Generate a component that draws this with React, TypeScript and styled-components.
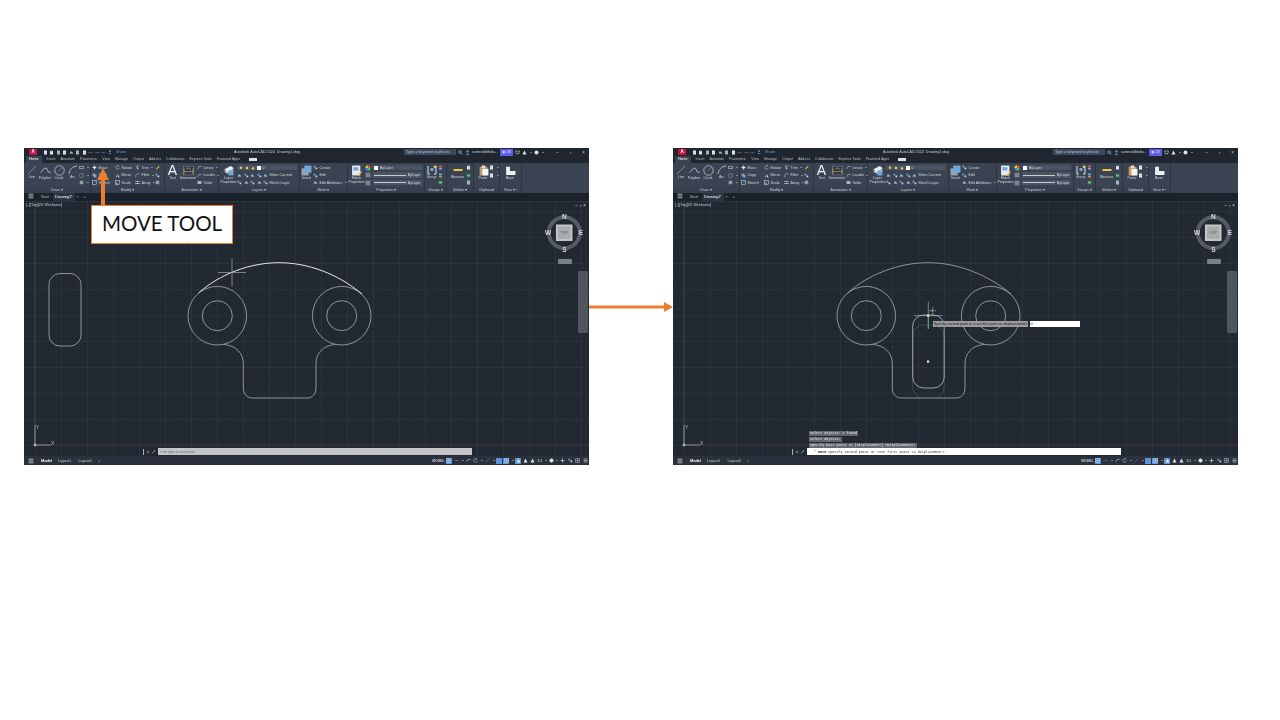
import React from "react";
import styled, { createGlobalStyle } from "styled-components";

const GlobalStyle = createGlobalStyle`
  html, body {
    margin: 0;
    padding: 0;
    background: #ffffff;
  }
`;

const Slide = styled.div`
  width: 1280px;
  height: 720px;
  box-sizing: border-box;
  padding: 148px 0 0 24px;
  display: flex;
  align-items: flex-start;
  background: #ffffff;
  overflow: hidden;
`;

const WindowSlot = styled.div`
  position: relative;
  width: 565px;
  height: 317px;
  flex: none;
`;

const Connector = styled.div`
  width: 84px;
  height: 317px;
  flex: none;
  display: flex;
  align-items: center;
`;

const Callout = styled.div`
  position: absolute;
  left: 67px;
  top: 57px;
  width: 142px;
  height: 39px;
  box-sizing: border-box;
  border: 1px solid #ed7d31;
  padding-bottom: 3px;
  background: #ffffff;
  display: flex;
  align-items: center;
  justify-content: center;
  font-family: Lato, "Open Sans", sans-serif;
  font-size: 20.5px;
  color: #111111;
`;

const CalloutArrow = styled.svg`
  position: absolute;
  left: 71px;
  top: 19px;
  width: 16px;
  height: 40px;
`;

const Frame = styled.div`
  width: 100%;
  height: 100%;
  display: flex;
  flex-direction: column;
  background: #1f2630;
  font-family: "Liberation Sans", Arial, sans-serif;
  font-size: 3.8px;
  color: #d3d8df;
  white-space: nowrap;
  filter: blur(0.4px);
  overflow: hidden;
`;

const TitleBar = styled.div`
  height: 8px;
  flex: none;
  display: flex;
  align-items: center;
  background: #1f2630;
`;

const QuickAccess = styled.div`
  width: 210px;
  flex: none;
  box-sizing: border-box;
  padding-left: 5px;
  display: flex;
  align-items: center;
  gap: 1.5px;
`;

const Logo = styled.div`
  width: 8px;
  height: 6px;
  margin-right: 4px;
  background: #c8123f;
  color: #ffffff;
  font-weight: 700;
  font-size: 4.5px;
  line-height: 6px;
  text-align: center;
`;

const ShareLink = styled.span`
  margin-left: 3px;
  color: #58a6e6;
`;

const DocTitle = styled.div`
  width: 170px;
  flex: none;
  font-size: 3.7px;
  color: #c6ccd4;
`;

const Tray = styled.div`
  flex: 1;
  display: flex;
  align-items: center;
  gap: 2px;
`;

const SearchBox = styled.div`
  width: 52px;
  height: 6px;
  flex: none;
  box-sizing: border-box;
  padding-left: 2px;
  background: #3c4a5e;
  color: #b7c0cc;
  line-height: 6px;
`;

const UserName = styled.span`
  width: 26px;
  font-size: 3.5px;
  color: #c6ccd4;
`;

const TrialBadge = styled.div`
  width: 13px;
  height: 7px;
  flex: none;
  background: #5f5fe6;
  color: #dfe3ff;
  text-align: center;
  line-height: 7px;
`;

const WinControls = styled.div`
  margin-left: auto;
  margin-right: 4px;
  display: flex;
  gap: 11px;
  color: #c6ccd4;
  font-size: 4.5px;
`;

const TabRow = styled.div`
  height: 7px;
  flex: none;
  display: flex;
  align-items: stretch;
  gap: 5px;
  padding-left: 2px;
  background: #1f2630;
`;

const RibbonTab = styled.div<{ $active?: boolean }>`
  padding: 0 ${(p) => (p.$active ? "3px" : "0")};
  line-height: 7px;
  font-size: 3.6px;
  color: ${(p) => (p.$active ? "#ffffff" : "#b6bdc7")};
  background: ${(p) => (p.$active ? "#3a4352" : "transparent")};
`;

const ViewPill = styled.div`
  width: 8px;
  height: 3px;
  align-self: center;
  margin-left: 4px;
  background: #dfe3e8;
`;

const Ribbon = styled.div`
  height: 30px;
  flex: none;
  display: flex;
  background: #3a4352;
`;

const Panel = styled.section<{ $w: number }>`
  width: ${(p) => p.$w}px;
  flex: none;
  display: flex;
  flex-direction: column;
  border-right: 0.5px solid #2c3441;
  box-sizing: border-box;
`;

const PanelBody = styled.div<{ $pad?: number }>`
  flex: 1;
  display: flex;
  gap: 0;
  padding: 1.5px 0 0 ${(p) => p.$pad ?? 1}px;
  min-height: 0;
`;

const PanelTitle = styled.div`
  height: 6px;
  flex: none;
  text-align: center;
  line-height: 6px;
  font-size: 3.6px;
  color: #c5cbd3;
  background: #37404e;
`;

const BigTool = styled.div<{ $w: number }>`
  width: ${(p) => p.$w}px;
  flex: none;
  display: flex;
  flex-direction: column;
  align-items: center;
  font-size: 3.5px;
  line-height: 4px;
  text-align: center;
  white-space: normal;
`;

const BigLetter = styled.div`
  height: 11px;
  font-size: 14px;
  line-height: 11px;
  color: #f2f4f6;
`;

const ToolColumn = styled.div<{ $w?: number }>`
  ${(p) => (p.$w ? `width: ${p.$w}px; flex: none;` : "flex: 1; min-width: 0;")}
  display: flex;
  flex-direction: column;
  gap: 1.5px;
`;

const ToolRow = styled.div`
  height: 6px;
  display: flex;
  align-items: center;
  gap: 1.5px;
  font-size: 3.7px;
`;

const Caret = styled.span`
  width: 0;
  height: 0;
  margin-left: 1px;
  border-left: 1px solid transparent;
  border-right: 1px solid transparent;
  border-top: 1.4px solid #c5cbd3;
`;

const DropDown = styled.div`
  flex: 1;
  height: 5.5px;
  min-width: 0;
  margin-right: 2px;
  padding: 0 1.5px;
  display: flex;
  align-items: center;
  gap: 2px;
  background: #4a5362;
  font-size: 3.5px;
`;

const Swatch = styled.span`
  width: 4px;
  height: 4px;
  flex: none;
  background: #ffffff;
`;

const Rule = styled.span`
  flex: 1;
  height: 0.5px;
  background: #c5cbd3;
`;

const FileTabs = styled.div`
  height: 9px;
  flex: none;
  box-sizing: border-box;
  border-bottom: 1px solid #2d3542;
  display: flex;
  align-items: stretch;
  padding-left: 4px;
  background: #1c222b;
`;

const FileTab = styled.div<{ $active?: boolean; $gap?: number }>`
  margin-left: ${(p) => p.$gap ?? 0}px;
  padding: 0 2px;
  line-height: 8px;
  color: ${(p) => (p.$active ? "#ffffff" : "#b6bdc7")};
  background: ${(p) => (p.$active ? "#2b3340" : "transparent")};
`;

const Canvas = styled.div`
  position: relative;
  flex: 1;
  min-height: 0;
  background-color: #212831;
  background-image:
    linear-gradient(#29313c 0.6px, transparent 0.6px),
    linear-gradient(90deg, #29313c 0.6px, transparent 0.6px),
    linear-gradient(#232a34 0.5px, transparent 0.5px),
    linear-gradient(90deg, #232a34 0.5px, transparent 0.5px);
  background-size: 26px 26px, 26px 26px, 5.2px 5.2px, 5.2px 5.2px;
  background-position: 11px 9px, 11px 9px, 11px 9px, 11px 9px;
`;

const Drawing = styled.svg`
  position: absolute;
  inset: 0;
  width: 100%;
  height: 100%;
`;

const ViewLabel = styled.div`
  position: absolute;
  left: 2px;
  top: 1px;
  font-size: 3.6px;
  color: #c6ccd4;
`;

const ViewportControls = styled.div`
  position: absolute;
  right: 3px;
  top: 1px;
  display: flex;
  gap: 2px;
  font-size: 4.5px;
  line-height: 5px;
  color: #d3d8df;
`;

const WcsPill = styled.div`
  position: absolute;
  left: 533.5px;
  top: 57px;
  width: 14px;
  height: 4.5px;
  border-radius: 1px;
  background: #77808c;
`;

const NavBar = styled.div`
  position: absolute;
  left: 554px;
  top: 69px;
  width: 10px;
  height: 62px;
  border-radius: 1px;
  background: #50565e;
`;

const CommandDock = styled.div`
  position: absolute;
  left: 119px;
  bottom: 1px;
  height: 7px;
  display: flex;
  align-items: center;
  gap: 1.5px;
  color: #c6ccd4;
`;

const Grip = styled.span`
  width: 1px;
  height: 6px;
  background: #aab1bb;
`;

const CommandInput = styled.div<{ $live?: boolean }>`
  width: 313.5px;
  height: 7px;
  margin-left: 0.5px;
  box-sizing: border-box;
  padding-left: ${(p) => (p.$live ? "7px" : "2px")};
  display: flex;
  align-items: center;
  gap: 2px;
  background: ${(p) => (p.$live ? "#ffffff" : "#c4c5c6")};
  color: ${(p) => (p.$live ? "#333333" : "#6b6f75")};
  font-family: ${(p) => (p.$live ? '"Liberation Mono", monospace' : '"Liberation Sans", sans-serif')};
  font-size: ${(p) => (p.$live ? 3.4 : 3.6)}px;
`;

const History = styled.div`
  position: absolute;
  left: 136px;
  top: 229px;
  display: flex;
  flex-direction: column;
  align-items: flex-start;
  gap: 1.2px;
`;

const HistoryLine = styled.div`
  height: 4.8px;
  padding: 0 1px;
  background: #62676e;
  color: #eceef0;
  font-family: "Liberation Mono", monospace;
  font-size: 3.4px;
  line-height: 4.8px;
`;

const PointPrompt = styled.div`
  position: absolute;
  left: 260px;
  top: 118.5px;
  width: 94.5px;
  height: 6px;
  padding-left: 1px;
  box-sizing: border-box;
  background: #9b9b9b;
  color: #1d1f22;
  font-size: 3.7px;
  line-height: 6px;
`;

const PointInput = styled.div`
  position: absolute;
  left: 356.5px;
  top: 118.5px;
  width: 50.5px;
  height: 6px;
  padding-left: 1px;
  box-sizing: border-box;
  background: #ffffff;
  color: #222222;
  font-size: 3.7px;
  line-height: 6px;
`;

const StatusBar = styled.div`
  height: 9px;
  flex: none;
  display: flex;
  align-items: center;
  padding-left: 4px;
  padding-right: 1px;
  background: #2a313d;
`;

const LayoutTab = styled.div<{ $active?: boolean; $gap?: number }>`
  margin-left: ${(p) => p.$gap ?? 6}px;
  font-weight: ${(p) => (p.$active ? 700 : 400)};
  color: ${(p) => (p.$active ? "#ffffff" : "#c2c8d0")};
`;

const StatusTray = styled.div`
  margin-left: auto;
  display: flex;
  align-items: center;
  gap: 1.4px;
`;

const ModelText = styled.span`
  font-weight: 700;
  color: #c6ccd4;
  font-size: 3.4px;
`;

const Toggle = styled.span<{ $on?: boolean }>`
  width: 6px;
  height: 6px;
  flex: none;
  display: flex;
  align-items: center;
  justify-content: center;
  background: ${(p) => (p.$on ? "#5c93d6" : "transparent")};
`;

type IconName =
  | "line" | "poly" | "circle" | "arc" | "rect" | "hatch" | "move" | "copy" | "stretch"
  | "rotate" | "mirror" | "scale" | "trim" | "fillet" | "array" | "pencil"
  | "dim" | "table" | "leader" | "layers" | "bulb" | "sun" | "lock" | "stack" | "insert"
  | "block" | "match" | "wheel" | "gray" | "group" | "groupA" | "groupB" | "measure"
  | "clip" | "note" | "calc" | "paste" | "base" | "doc" | "menu" | "plus" | "search"
  | "user" | "cart" | "tri" | "help" | "wrench" | "close" | "grid" | "dots";

const W = "#dfe4ea";
const B = "#6fa8dc";
const Y = "#f0c64a";

const glyphs: Record<IconName, React.ReactNode> = {
  line: <path d="M1 9 9 1" stroke={B} strokeWidth=".8" fill="none" />,
  poly: <path d="M.5 7 4 3h2l1.5 3.5H10M5 3" stroke={W} strokeWidth=".6" fill="none" />,
  circle: <><circle cx="5" cy="5" r="4.3" stroke={W} strokeWidth=".6" fill="none" /><path d="M5 5 8 2" stroke={B} strokeWidth=".6" /></>,
  arc: <path d="M1 9C1.5 4.5 4.5 1.5 9 1" stroke={W} strokeWidth=".7" fill="none" />,
  rect: <rect x="1.5" y="2.5" width="7" height="5" stroke={W} strokeWidth="1" fill="none" />,
  hatch: <><rect x="1.5" y="1.5" width="7" height="7" fill="#8c96a3" /><path d="M2 7 7 2" stroke={W} strokeWidth=".8" /></>,
  move: <path d="M5 .5 6.8 3H5.8v1.2H7V3.2L9.5 5 7 6.8V5.8H5.8V7h1L5 9.5 3.2 7h1V5.8H3v1L.5 5 3 3.2v1h1.2V3h-1z" fill={W} />,
  copy: <><rect x="1" y="1" width="5.5" height="5.5" fill="#8c96a3" /><rect x="3.5" y="3.5" width="5.5" height="5.5" fill={B} /></>,
  stretch: <><rect x="1" y="1" width="8" height="8" stroke={W} fill="none" /><path d="M4 6 8 2" stroke={B} /></>,
  rotate: <path d="M8.5 5A3.5 3.5 0 1 1 5 1.5h2M6 0 7.6 1.5 6 3" stroke={W} strokeWidth=".9" fill="none" />,
  mirror: <><path d="M1 8.5 4.2 2v6.5z" fill={B} /><path d="M9 8.5 5.8 2v6.5z" fill={W} /></>,
  scale: <><rect x="1" y="1" width="8" height="8" stroke={W} fill="none" /><rect x="1" y="5" width="4" height="4" fill={B} /></>,
  trim: <path d="M1 2h8M5 2v7M2 5l6 3" stroke={W} strokeWidth=".9" fill="none" />,
  fillet: <path d="M1.5 9V5C1.5 3 3 1.5 5 1.5h4" stroke={W} strokeWidth=".9" fill="none" />,
  array: <path d="M1 2h2v2H1zM4 2h2v2H4zM7 2h2v2H7zM1 6h2v2H1zM4 6h2v2H4zM7 6h2v2H7z" fill={W} />,
  pencil: <><path d="M2 8 7.5 2 9 3.4 3.4 9z" fill={Y} /><path d="M7.5 2 9 3.4" stroke="#d0563f" /></>,
  dim: <><rect x=".5" y="1" width="9" height="8" stroke="#9aa3ae" strokeWidth=".4" fill="#2d3542" /><path d="M1 8V3M9 8V3M1 6h8" stroke={Y} strokeWidth=".5" /><path d="M3 4 5 2.5 7 4" stroke={W} strokeWidth=".5" fill="none" /></>,
  table: <rect x="1" y="2" width="8" height="6" fill="#aab2bc" />,
  leader: <path d="M1 8 4 3h5" stroke={W} fill="none" />,
  layers: <><path d="M1 6 7 3 10 5 4 8z" fill="#bfc7d0" /><path d="M1 4 7 1 10 3 4 6z" fill="#eef1f4" /><rect x="5" y="5" width="4.5" height="4.5" fill={B} /></>,
  bulb: <circle cx="5" cy="4.5" r="3.2" fill={Y} />,
  sun: <circle cx="5" cy="5" r="3" fill="#f6d765" />,
  lock: <><rect x="2" y="4" width="6" height="5" fill={Y} /><path d="M3.5 4V2.5h3V4" stroke={W} fill="none" /></>,
  stack: <><path d="M1 7 5 3 9 7z" fill="#cfd6dd" /><path d="M2 3h3v3H2z" fill={B} /></>,
  insert: <><rect x=".5" y="3" width="6.5" height="6.5" fill="#9aa4b0" /><rect x="3" y=".5" width="6.5" height="6.5" fill={B} /></>,
  block: <><rect x="1" y="1.5" width="3.5" height="3.5" fill={B} /><rect x="5" y="5" width="3.5" height="3.5" fill="#cfd6dd" /></>,
  match: <><rect x="1" y=".5" width="7.5" height="9" fill="#e8ecf0" /><rect x="2.2" y="2" width="4.5" height="3" fill={B} /><path d="M6 9.5 9.5 6" stroke={Y} strokeWidth="1.2" /></>,
  wheel: <><path d="M5 5V.5A4.5 4.5 0 0 1 9.5 5z" fill="#e8503a" /><path d="M5 5h4.5A4.5 4.5 0 0 1 5 9.5z" fill="#4fbf5a" /><path d="M5 5v4.5A4.5 4.5 0 0 1 .5 5z" fill="#3f7fe0" /><path d="M5 5H.5A4.5 4.5 0 0 1 5 .5z" fill="#d8c83a" /></>,
  gray: <rect x="1" y="1" width="8" height="8" fill="#7c8590" />,
  group: <><path d="M1 1v8h2M9 1v8H7" stroke={W} fill="none" /><rect x="3.5" y="3" width="3" height="3" fill={B} /><circle cx="8" cy="1.8" r="1.4" fill={Y} /></>,
  groupA: <><rect x="2" y="1" width="6" height="3.5" fill="#c75b4a" /><rect x="2" y="5.5" width="6" height="3.5" fill={B} /></>,
  groupB: <><rect x="2" y="1" width="6" height="3.5" fill={B} /><rect x="2" y="5.5" width="6" height="3.5" fill="#d18a45" /></>,
  measure: <rect x=".5" y="4" width="9" height="2" fill={Y} />,
  clip: <><rect x="2" y="2" width="6" height="7" fill="#dfe4ea" /><rect x="3.5" y=".5" width="3" height="3" fill={B} /></>,
  note: <><rect x="1.5" y="1.5" width="7" height="7" fill="#3f9a63" /><path d="M3 5h4" stroke={W} /></>,
  calc: <rect x="2" y="1" width="6" height="8" fill="#aab2bc" />,
  paste: <><rect x="1.5" y="1.5" width="7" height="8" fill="#c59a63" /><rect x="3.5" y=".5" width="3" height="2" fill="#e6e9ec" /><rect x="4" y="3.5" width="5.5" height="6" fill="#f1f3f5" /></>,
  base: <path d="M1 1.5h3.5v4H9.5v3.5H1z" fill="#eef1f4" />,
  doc: <><rect x="2" y="1" width="6" height="8" fill="#eef1f4" /><path d="M3 4h4M3 6h4" stroke="#7c8590" strokeWidth=".7" /></>,
  menu: <path d="M1 2h8M1 5h8M1 8h8" stroke={W} strokeWidth="1.2" />,
  plus: <path d="M5 1v8M1 5h8" stroke={W} strokeWidth="1.3" />,
  search: <><circle cx="4" cy="4" r="2.8" stroke={W} fill="none" /><path d="M6 6 9 9" stroke={W} /></>,
  user: <><circle cx="5" cy="3" r="2.3" fill="#5aa3e6" /><path d="M1 9.5C1 6.5 9 6.5 9 9.5z" fill="#5aa3e6" /></>,
  cart: <path d="M1 2h8L8 7H2.5zM3 8.5h1M6.5 8.5h1" stroke={W} fill="none" />,
  tri: <path d="M5 1 9 9H1z" fill={W} />,
  help: <circle cx="5" cy="5" r="4" fill={W} />,
  wrench: <path d="M2 9 7 4M6 2l2 2" stroke={W} strokeWidth="1.2" fill="none" />,
  close: <path d="M2 2 8 8M8 2 2 8" stroke={W} strokeWidth="1" />,
  grid: <path d="M1 1h8v8H1zM1 5h8M5 1v8" stroke={W} strokeWidth=".8" fill="none" />,
  dots: <path d="M1 5h2v1H1zM4 5h2v1H4zM7 5h2v1H7z" fill="#aab2bc" />,
};

function Icon({ name, size = 5 }: { name: IconName; size?: number }) {
  return (
    <svg width={size} height={size} viewBox="0 0 10 10" style={{ flex: "none" }}>
      {glyphs[name]}
    </svg>
  );
}

function Big({ w, icon, size = 10, children }: { w: number; icon: IconName; size?: number; children?: React.ReactNode }) {
  return (
    <BigTool $w={w}>
      <Icon name={icon} size={size} />
      {children}
    </BigTool>
  );
}

function Small({ icon, label, caret }: { icon?: IconName; label?: string; caret?: boolean }) {
  return (
    <ToolRow>
      {icon && <Icon name={icon} />}
      {label}
      {caret && <Caret />}
    </ToolRow>
  );
}

function RibbonPanels() {
  return (
    <Ribbon>
      <Panel $w={67}>
        <PanelBody $pad={2}>
          <Big w={12} icon="line">Line</Big>
          <Big w={14} icon="poly" size={11}>Polyline</Big>
          <Big w={14} icon="circle" size={11}>Circle</Big>
          <Big w={13} icon="arc">Arc</Big>
          <ToolColumn $w={10}>
            <Small icon="rect" caret />
            <Small icon="circle" caret />
            <Small icon="hatch" caret />
          </ToolColumn>
        </PanelBody>
        <PanelTitle>Draw ▾</PanelTitle>
      </Panel>
      <Panel $w={74}>
        <PanelBody>
          <ToolColumn $w={23}>
            <Small icon="move" label="Move" />
            <Small icon="copy" label="Copy" />
            <Small icon="stretch" label="Stretch" />
          </ToolColumn>
          <ToolColumn $w={20}>
            <Small icon="rotate" label="Rotate" />
            <Small icon="mirror" label="Mirror" />
            <Small icon="scale" label="Scale" />
          </ToolColumn>
          <ToolColumn $w={20}>
            <Small icon="trim" label="Trim" caret />
            <Small icon="fillet" label="Fillet" caret />
            <Small icon="array" label="Array" caret />
          </ToolColumn>
          <ToolColumn $w={7}>
            <Small icon="pencil" />
            <Small icon="block" />
            <Small icon="hatch" />
          </ToolColumn>
        </PanelBody>
        <PanelTitle>Modify ▾</PanelTitle>
      </Panel>
      <Panel $w={54}>
        <PanelBody $pad={1}>
          <BigTool $w={13}>
            <BigLetter>A</BigLetter>
            Text
          </BigTool>
          <Big w={18} icon="dim" size={11}>Dimension</Big>
          <ToolColumn>
            <Small icon="leader" label="Linear" caret />
            <Small icon="leader" label="Leader" caret />
            <Small icon="table" label="Table" />
          </ToolColumn>
        </PanelBody>
        <PanelTitle>Annotation ▾</PanelTitle>
      </Panel>
      <Panel $w={81}>
        <PanelBody $pad={1}>
          <Big w={17} icon="layers" size={11}>Layer Properties</Big>
          <ToolColumn>
            <ToolRow>
              <DropDown>
                <Icon name="bulb" size={4} />
                <Icon name="sun" size={4} />
                <Icon name="lock" size={4} />
                <Swatch />0
              </DropDown>
            </ToolRow>
            <ToolRow>
              <Icon name="stack" /><Icon name="block" /><Icon name="stack" /><Icon name="block" />
              <Icon name="stack" />Make Current
            </ToolRow>
            <ToolRow>
              <Icon name="block" /><Icon name="stack" /><Icon name="block" /><Icon name="stack" />
              <Icon name="block" />Match Layer
            </ToolRow>
          </ToolColumn>
        </PanelBody>
        <PanelTitle>Layers ▾</PanelTitle>
      </Panel>
      <Panel $w={48}>
        <PanelBody $pad={0}>
          <Big w={13} icon="insert" size={11}>Insert</Big>
          <ToolColumn>
            <Small icon="block" label="Create" />
            <Small icon="block" label="Edit" />
            <Small icon="stack" label="Edit Attributes" caret />
          </ToolColumn>
        </PanelBody>
        <PanelTitle>Block ▾</PanelTitle>
      </Panel>
      <Panel $w={77}>
        <PanelBody $pad={0}>
          <Big w={17} icon="match" size={11}>Match Properties</Big>
          <ToolColumn>
            <ToolRow>
              <Icon name="wheel" size={6} />
              <DropDown><Swatch />ByLayer</DropDown>
            </ToolRow>
            <ToolRow>
              <Icon name="gray" size={6} />
              <DropDown><Rule />ByLayer</DropDown>
            </ToolRow>
            <ToolRow>
              <Icon name="gray" size={6} />
              <DropDown><Rule />ByLayer</DropDown>
            </ToolRow>
          </ToolColumn>
        </PanelBody>
        <PanelTitle>Properties ▾</PanelTitle>
      </Panel>
      <Panel $w={22}>
        <PanelBody $pad={0}>
          <Big w={13} icon="group">Group</Big>
          <ToolColumn $w={7}>
            <Small icon="groupA" />
            <Small icon="groupB" />
            <Small icon="note" />
          </ToolColumn>
        </PanelBody>
        <PanelTitle>Groups ▾</PanelTitle>
      </Panel>
      <Panel $w={27}>
        <PanelBody $pad={2}>
          <Big w={17} icon="measure">Measure</Big>
          <ToolColumn $w={6}>
            <Small icon="clip" />
            <Small icon="note" />
            <Small icon="calc" />
          </ToolColumn>
        </PanelBody>
        <PanelTitle>Utilities ▾</PanelTitle>
      </Panel>
      <Panel $w={26}>
        <PanelBody $pad={3}>
          <Big w={12} icon="paste" size={11}>Paste</Big>
          <ToolColumn $w={9}>
            <Small icon="doc" caret />
            <Small icon="doc" caret />
          </ToolColumn>
        </PanelBody>
        <PanelTitle>Clipboard</PanelTitle>
      </Panel>
      <Panel $w={22}>
        <PanelBody $pad={3}>
          <Big w={14} icon="base" size={11}>Base</Big>
        </PanelBody>
        <PanelTitle>View ▾ ▪</PanelTitle>
      </Panel>
    </Ribbon>
  );
}

const LINE = "#a9adb2";

// shared part outline, in the coordinates of the left window on the slide
function PartOutline({ highlight }: { highlight?: boolean }) {
  return (
    <g fill="none" stroke={LINE} strokeWidth=".8">
      <circle cx="217.3" cy="315.7" r="29.3" />
      <circle cx="217.3" cy="315.7" r="15" />
      <circle cx="341.7" cy="315.7" r="29.3" />
      <circle cx="341.7" cy="315.7" r="15" />
      <path d="M224 344.5C236 345.5 243.3 353 243.3 364V388C243.3 394 247 398 252.5 398H307C312.5 398 316 394 316 388V364C316 353 323 345.5 335 344.5" />
      <path
        d="M198.5 293C220 274 250 262.7 279 262.7C308 262.7 338 274 362 294"
        stroke={highlight ? "#e6e8ea" : LINE}
        strokeWidth={highlight ? 1 : 0.8}
      />
    </g>
  );
}

function ViewCube() {
  return (
    <g>
      <circle cx="564.3" cy="232.7" r="15.5" fill="none" stroke="#555c66" strokeWidth="4" />
      <rect x="556" y="224.5" width="16.5" height="16.5" fill="#c3c5c7" />
      <rect x="558" y="226.5" width="12.5" height="12.5" fill="#a9acaf" />
      <g fontFamily="Liberation Sans" fontWeight="700" fontSize="6.5" fill="#d8dadd" textAnchor="middle">
        <text x="564.3" y="219">N</text>
        <text x="564.3" y="252">S</text>
        <text x="548" y="235">W</text>
        <text x="581" y="235">E</text>
      </g>
      <text x="564.3" y="234" fontFamily="Liberation Sans" fontSize="3.4" fill="#4c5056" textAnchor="middle">TOP</text>
    </g>
  );
}

function SlotBefore() {
  return <rect x="49" y="273.5" width="32" height="72.5" rx="11" fill="none" stroke={LINE} strokeWidth=".8" />;
}

function SlotMoving() {
  return (
    <g fill="none">
      <rect x="263.7" y="325" width="31.5" height="73" rx="11" stroke="#585d64" strokeWidth=".6" />
      <rect x="263.7" y="315" width="31.5" height="73" rx="11" stroke={LINE} strokeWidth=".9" />
      <rect x="278" y="360.5" width="2.2" height="2.2" fill="#e6e8ea" />
      <path d="M279.3 301.7V329M265 315.7h28.7" stroke="#b9bcc0" strokeWidth=".6" />
      <path d="M279.3 316V329" stroke="#4fb85a" strokeWidth=".9" />
      <rect x="278" y="314.5" width="2.4" height="2.4" fill="#cfd2d5" />
      <path d="M283.7 307.5v6.4M280.5 310.7h6.4" stroke="#e6e8ea" strokeWidth=".9" strokeDasharray="1 .9" />
    </g>
  );
}

function CadWindow({ after }: { after?: boolean }) {
  return (
    <Frame>
      <TitleBar>
        <QuickAccess>
          <Logo>A</Logo>
          {(["doc", "clip", "calc", "doc", "stack", "calc", "doc", "dots", "dots", "dots"] as IconName[]).map((n, i) => (
            <Icon key={i} name={n} />
          ))}
          <Icon name="user" size={4} />
          <ShareLink>Share</ShareLink>
        </QuickAccess>
        <DocTitle>Autodesk AutoCAD 2024 &nbsp;Drawing1.dwg</DocTitle>
        <Tray>
          <SearchBox>Type a keyword or phrase</SearchBox>
          <Icon name="search" />
          <Icon name="user" />
          <UserName>sameuddbhdia...</UserName>
          <TrialBadge>◉ 23</TrialBadge>
          <Icon name="cart" />
          <Icon name="tri" />
          <Caret />
          <Icon name="help" />
          <Caret />
          <WinControls>
            <span>–</span>
            <span>▫</span>
            <span>×</span>
          </WinControls>
        </Tray>
      </TitleBar>
      <TabRow>
        <RibbonTab $active>Home</RibbonTab>
        {["Insert", "Annotate", "Parametric", "View", "Manage", "Output", "Add-ins", "Collaborate", "Express Tools", "Featured Apps"].map((t) => (
          <RibbonTab key={t}>{t}</RibbonTab>
        ))}
        <ViewPill />
      </TabRow>
      <RibbonPanels />
      <FileTabs>
        <Icon name="menu" size={6} />
        <FileTab $gap={5}>Start</FileTab>
        <FileTab $gap={2} $active>Drawing1*</FileTab>
        <FileTab $gap={0}>×</FileTab>
        <FileTab $gap={1}>+</FileTab>
      </FileTabs>
      <Canvas>
        <Drawing viewBox="24 202 565 254">
          <path d="M35 445H589" stroke="#56303a" strokeWidth=".7" />
          <path d="M35 202V445" stroke="#2f5a3f" strokeWidth=".7" />
          <path d="M35 425V445H51" fill="none" stroke="#b5b9be" strokeWidth=".7" />
          <rect x="33.8" y="443.8" width="2.4" height="2.4" fill="#b5b9be" />
          <g fontFamily="Liberation Sans" fontSize="5" fill="#b5b9be">
            <text x="36" y="429">Y</text>
            <text x="51" y="445">X</text>
          </g>
          <PartOutline highlight={!after} />
          {after ? <SlotMoving /> : <SlotBefore />}
          {!after && <path d="M232 258.5V286.5M218 272.5H246" stroke="#a5a9ae" strokeWidth=".7" />}
          <ViewCube />
        </Drawing>
        <ViewLabel>[–][Top][2D Wireframe]</ViewLabel>
        <ViewportControls>
          <span>–</span>
          <span>▫</span>
          <span>×</span>
        </ViewportControls>
        <WcsPill />
        <NavBar />
        {after && (
          <>
            <PointPrompt>Specify second point or &lt;use first point as displacement&gt;:</PointPrompt>
            <PointInput>0</PointInput>
            <History>
              <HistoryLine>Select objects: 1 found</HistoryLine>
              <HistoryLine>Select objects:</HistoryLine>
              <HistoryLine>Specify base point or [Displacement] &lt;Displacement&gt;:</HistoryLine>
            </History>
          </>
        )}
        <CommandDock>
          <Grip />
          <Icon name="close" size={4} />
          <Icon name="wrench" />
          <CommandInput $live={after}>
            {after ? (
              <>* <b>MOVE</b> Specify second point or &lt;use first point as displacement&gt;:</>
            ) : (
              <>▭▾ Type a command</>
            )}
          </CommandInput>
        </CommandDock>
      </Canvas>
      <StatusBar>
        <Icon name="menu" size={6} />
        <LayoutTab $active $gap={7}>Model</LayoutTab>
        <LayoutTab>Layout1</LayoutTab>
        <LayoutTab $gap={7}>Layout2</LayoutTab>
        <LayoutTab $gap={6}>+</LayoutTab>
        <StatusTray>
          <ModelText>MODEL</ModelText>
          <Toggle $on><Icon name="grid" /></Toggle>
          <Toggle><Icon name="dots" /></Toggle>
          <Caret />
          <Toggle><Icon name="leader" /></Toggle>
          <Toggle><Icon name="rotate" /></Toggle>
          <Caret />
          <Toggle><Icon name="line" /></Toggle>
          <Caret />
          <Toggle $on><Icon name="line" /></Toggle>
          <Toggle $on><Icon name="grid" /></Toggle>
          <Caret />
          <Toggle $on><Icon name="tri" /></Toggle>
          <Toggle><Icon name="tri" /></Toggle>
          <Toggle><Icon name="tri" /></Toggle>
          <ModelText>1:1</ModelText>
          <Caret />
          <Toggle><Icon name="help" /></Toggle>
          <Caret />
          <Toggle><Icon name="plus" /></Toggle>
          <Toggle><Icon name="block" /></Toggle>
          <Toggle><Icon name="grid" /></Toggle>
          <Toggle><Icon name="menu" /></Toggle>
        </StatusTray>
      </StatusBar>
    </Frame>
  );
}

export default function App() {
  return (
    <>
      <GlobalStyle />
      <Slide>
        <WindowSlot>
          <CadWindow />
          <CalloutArrow viewBox="0 0 16 40">
            <path d="M8 1 14 13H10V40H6V13H2z" fill="#ed7d31" />
          </CalloutArrow>
          <Callout>MOVE TOOL</Callout>
        </WindowSlot>
        <Connector>
          <svg width="84" height="12" viewBox="0 0 84 12">
            <path d="M0 4.5H75V1L84 6 75 11V7.5H0z" fill="#ed7d31" />
          </svg>
        </Connector>
        <WindowSlot>
          <CadWindow after />
        </WindowSlot>
      </Slide>
    </>
  );
}
